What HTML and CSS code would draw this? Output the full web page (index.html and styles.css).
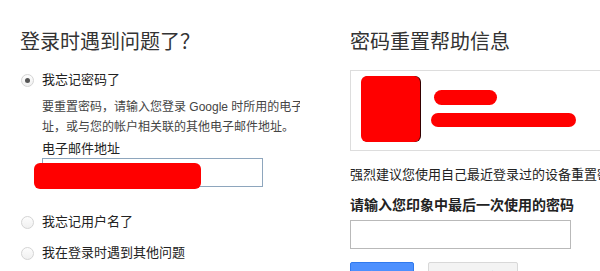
FILE: index.html
```
<!DOCTYPE html>
<html lang="zh">
<head>
    <meta charset="UTF-8">
    <title>登录时遇到问题了？</title>
    <link rel="stylesheet" href="styles.css">
</head>
<body>
    <div class="page">
        <div class="left-col">
            <h1>登录时遇到问题了？</h1>

            <label class="option">
                <span class="radio checked"></span>
                <span>我忘记密码了</span>
            </label>
            <div class="option-body">
                <p class="hint">要重置密码，请输入您登录 Google 时所用的电子邮件地址，<br>址，或与您的帐户相关联的其他电子邮件地址。</p>
                <div class="field-label">电子邮件地址</div>
                <div class="email-wrap">
                    <input type="text" class="email-input">
                    <span class="redact email-redact"></span>
                </div>
            </div>

            <label class="option option-user">
                <span class="radio"></span>
                <span>我忘记用户名了</span>
            </label>
            <label class="option option-other">
                <span class="radio"></span>
                <span>我在登录时遇到其他问题</span>
            </label>
        </div>

        <div class="right-col">
            <h1>密码重置帮助信息</h1>

            <div class="account-card">
                <span class="redact avatar"></span>
                <div class="account-info">
                    <span class="redact name-bar"></span>
                    <span class="redact mail-bar"></span>
                </div>
            </div>

            <p class="advice">强烈建议您使用自己最近登录过的设备重置密码，以便我们确认您的身份。</p>
            <div class="pwd-label">请输入您印象中最后一次使用的密码</div>
            <input type="password" class="pwd-input">

            <div class="actions">
                <button class="btn-primary">继续</button>
                <button class="btn-default">我不知道</button>
            </div>
        </div>
    </div>
</body>
</html>
```

FILE: styles.css
```
html, body {
    margin: 0;
    padding: 0;
    overflow: hidden;
    background-color: white;
}

body {
    font-family: 'Liberation Sans', 'Noto Sans CJK SC', sans-serif;
    color: #222;
    font-size: 13px;
}

.page {
    display: flex;
    width: 600px;
    height: 271px;
    overflow: hidden;
    padding-top: 30px;
    box-sizing: border-box;
}

.left-col {
    width: 280px;
    padding-left: 20px;
    overflow: hidden;
    flex-shrink: 0;
}

.right-col {
    margin-left: 50px;
    width: 300px;
    flex-shrink: 0;
}

h1 {
    margin: 0;
    font-size: 20px;
    line-height: 24px;
    font-weight: normal;
    color: #333;
}

.option {
    display: flex;
    align-items: center;
    height: 20px;
    line-height: 20px;
    margin-top: 16px;
    font-size: 13px;
    color: #222;
}

.radio {
    width: 13px;
    height: 13px;
    margin-left: 1px;
    margin-right: 8px;
    border: 1px solid #d4d4d4;
    border-radius: 50%;
    background: linear-gradient(#fdfdfd, #f0f0f0);
    box-sizing: border-box;
    position: relative;
}

.radio.checked::after {
    content: '';
    position: absolute;
    left: 3px;
    top: 3px;
    width: 5px;
    height: 5px;
    border-radius: 50%;
    background-color: #555;
}

.option-body {
    padding-left: 22px;
}

.hint {
    margin: 7px 0 0;
    font-size: 12px;
    line-height: 20px;
    color: #444;
    white-space: nowrap;
}

.field-label {
    margin-top: 4px;
    line-height: 16px;
    font-size: 13px;
}

.email-wrap {
    position: relative;
    margin-top: 1px;
}

.email-input {
    display: block;
    width: 221px;
    height: 29px;
    border: 1px solid #8ea6bd;
    box-sizing: border-box;
    margin: 0;
}

.redact {
    display: block;
    background-color: #f00;
}

.email-redact {
    position: absolute;
    left: -8px;
    top: 5px;
    width: 167px;
    height: 26px;
    border-radius: 6px;
}

.option-user {
    margin-top: 25px;
}

.option-other {
    margin-top: 11px;
}

.account-card {
    display: flex;
    margin-top: 16px;
    width: 290px;
    height: 81px;
    border: 1px solid #ddd;
    box-sizing: border-box;
    padding: 5px 0 0 10px;
}

.avatar {
    width: 59px;
    height: 66px;
    border-radius: 6px;
    box-shadow: 1px 0 0 #300;
}

.account-info {
    margin-left: 11px;
    padding-top: 14px;
}

.name-bar {
    margin-left: 3px;
    width: 63px;
    height: 15px;
    border-radius: 8px;
}

.mail-bar {
    margin-top: 8px;
    width: 145px;
    height: 14px;
    border-radius: 7px;
}

.advice {
    margin: 14px 0 0;
    line-height: 20px;
    font-size: 13px;
    white-space: nowrap;
}

.pwd-label {
    margin-top: 10px;
    line-height: 20px;
    font-size: 14px;
    font-weight: bold;
    color: #222;
}

.pwd-input {
    display: block;
    margin: 5px 0 0;
    width: 221px;
    height: 29px;
    border: 1px solid #b9b9b9;
    box-sizing: border-box;
}

.actions {
    display: flex;
    margin-top: 13px;
}

.btn-primary,
.btn-default {
    height: 29px;
    border-radius: 2px;
    font-size: 13px;
    font-family: inherit;
    font-weight: bold;
    padding: 0;
}

.btn-primary {
    width: 64px;
    background-color: #4d90fe;
    border: 1px solid #3079ed;
    color: white;
}

.btn-default {
    width: 90px;
    margin-left: 14px;
    background-color: #f3f3f3;
    border: 1px solid #d8d8d8;
    color: #444;
}
```
